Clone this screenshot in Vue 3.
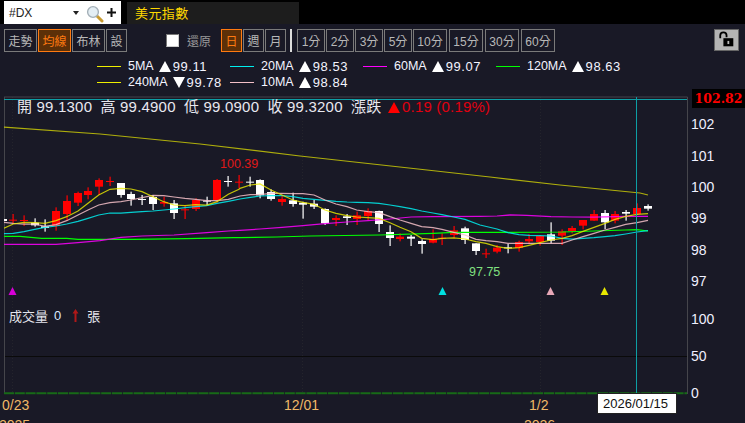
<script setup>
const scale = (x0, y0, pts) => pts.map(([x, y]) => `${(x0 + x / 3).toFixed(1)},${(y0 + y / 3).toFixed(1)}`).join(' ')

const ma5 = scale(0,150,[[12,235],[40,222],[72,217],[104,218],[135,220],[168,212],[200,200],[234,183],[264,160],[296,135],[330,118],[363,115],[393,117],[426,125],[459,140],[491,155],[522,165],[555,167],[587,164],[620,165],[651,155],[685,133],[717,118]])
  + ' ' + scale(240,170,[[0,55],[31,45],[60,42],[93,60],[126,75],[159,90],[189,97],[222,103],[255,120],[288,130],[321,137],[350,141],[384,143],[417,145],[450,158],[480,172],[513,185],[545,205],[579,209],[606,205],[641,204],[675,207],[708,215],[738,220]])
  + ' ' + scale(480,170,[[51,230],[84,235],[117,233],[147,226],[180,218],[213,210],[246,205],[276,197],[309,184],[342,172],[375,160],[405,148],[437,139],[471,133],[504,131]])
const ma10 = scale(0,150,[[12,217],[40,220],[72,222],[104,222],[135,229],[168,224],[200,212],[234,195],[264,180],[296,165],[330,158],[363,155],[393,150],[426,143],[459,136],[491,137],[522,141],[555,145],[587,148],[620,152],[651,152],[685,148]])
  + ' ' + scale(240,170,[[0,78],[31,74],[60,74],[93,70],[126,70],[159,71],[189,71],[222,75],[255,90],[288,102],[321,110],[350,120],[384,125],[417,128],[450,140],[480,150],[513,160],[545,170],[579,173],[606,178],[641,187],[675,195],[708,208]])
  + ' ' + scale(480,170,[[18,212],[51,215],[84,220],[117,220],[147,220],[180,220],[213,220],[246,220],[276,210],[309,200],[342,190],[375,180],[405,172],[437,163],[471,158],[504,151]])
const ma20 = scale(0,150,[[12,251],[40,250],[72,245],[104,238],[135,232],[168,228],[200,222],[234,214],[264,205],[296,195],[330,189],[363,189],[393,187],[426,185],[459,183],[491,180],[522,177],[555,173],[587,170],[620,167],[651,160],[685,154]])
  + ' ' + scale(240,170,[[0,87],[31,82],[60,78],[93,77],[126,77],[159,80],[189,85],[222,88],[255,91],[288,94],[321,96],[350,97],[384,98],[417,100],[450,105],[480,110],[513,116],[545,123],[579,129],[606,134],[641,141],[675,148]])
  + ' ' + scale(480,170,[[0,165],[51,177],[84,188],[117,194],[147,196],[180,197],[213,198],[246,205],[276,207],[309,205],[342,203],[375,200],[405,197],[437,192],[471,186],[504,182]])
const ma60 = scale(0,150,[[12,283],[100,283],[168,283],[234,278],[300,272],[363,262],[426,258],[522,255],[620,248],[685,243]])
  + ' ' + scale(240,170,[[0,181],[60,177],[126,172],[189,167],[255,161],[321,156],[384,152],[450,147],[513,141],[579,140]])
  + ' ' + scale(480,170,[[0,139],[51,138],[90,135],[140,136],[213,140],[276,141],[342,141],[437,139],[504,139]])
const ma120 = scale(0,150,[[12,259],[60,259],[125,265],[200,265],[234,268],[400,268],[560,266],[700,263]])
  + ' ' + scale(240,170,[[0,203],[110,201],[210,198],[420,195],[579,190],[640,187]])
  + ' ' + scale(480,170,[[0,187],[90,187],[246,186],[342,183],[437,180],[471,179],[504,183]])
const ma240 = '4,127 100,134 200,144 300,156 427,170 490,177 560,185 600,189 640,193 648,195'

const lines = [
  { c: '#0f0', p: ma120, o: 1 },
  { c: '#f0f', p: ma60, o: .85 },
  { c: '#0ee', p: ma20, o: .85 },
  { c: '#f4c0c8', p: ma10, o: .85 },
  { c: '#ee0', p: ma5, o: .8 },
  { c: '#ee0', p: ma240, o: .7 }
]

const c3 = (r, x, hi, lo, t, b) => ({ r, x: x / 3, hi: 150 + hi / 3, lo: 150 + lo / 3, t: 150 + t / 3, b: 150 + b / 3 })
const c4 = (r, x, hi, lo, t, b) => ({ r, x: 240 + x / 3, hi: 170 + hi / 3, lo: 170 + lo / 3, t: 170 + t / 3, b: 170 + b / 3 })
const c5 = (r, x, hi, lo, t, b) => ({ r, x: 480 + x / 3, hi: 170 + hi / 3, lo: 170 + lo / 3, t: 170 + t / 3, b: 170 + b / 3 })
const candles = [
  c3(0,8,207,213,207,213),
  c3(1,40,192,222,209,212),c3(1,72,196,228,210,213),c3(0,104,205,230,218,226),c3(0,135,208,245,229,234),
  c3(1,168,172,242,183,228),c3(1,200,136,213,153,192),c3(1,234,125,168,129,158),c3(1,264,112,148,123,135),
  c3(1,296,85,135,90,110),c3(1,330,80,108,93,96),c3(0,363,99,143,99,135),c3(0,393,125,167,132,147),
  c3(0,426,135,165,147,150),c3(0,459,135,180,141,162),c3(1,491,140,170,156,161),c3(0,522,150,207,160,189),
  c3(1,555,165,207,178,181),c3(1,587,145,183,150,177),c3(0,620,140,165,152,155),c3(1,651,87,158,90,150),
  c3(0,685,78,110,93,96),c3(1,717,75,115,95,98),
  c4(0,31,20,50,35,38),c4(0,60,28,85,30,76),c4(0,93,58,92,66,87),c4(1,126,78,107,87,96),c4(0,159,68,110,91,102),
  c4(0,189,95,146,98,104),c4(0,222,90,117,101,110),c4(0,255,115,165,117,160),c4(1,288,136,168,144,150),
  c4(0,321,132,165,139,144),c4(1,350,125,165,136,147),c4(1,384,115,150,123,138),c4(0,417,122,186,123,162),
  c4(0,450,166,228,186,204),c4(1,480,190,214,200,207),c4(0,513,195,228,200,206),c4(0,545,208,251,213,222),
  c4(1,579,178,220,207,218),c4(1,606,190,225,203,206),c4(1,641,168,205,181,195),c4(0,675,170,222,175,210),
  c4(0,708,220,255,220,243),c4(1,738,236,264,250,253),
  c5(1,51,225,250,233,245),c5(0,84,222,250,232,235),c5(1,117,212,245,216,234),c5(1,147,192,222,207,214),
  c5(1,180,195,227,198,216),c5(0,213,157,220,193,212),c5(1,246,178,225,184,197),c5(1,276,168,190,174,183),
  c5(1,309,150,178,150,167),c5(1,342,120,153,132,152),c5(0,375,120,177,129,157),c5(1,405,123,160,132,152),
  c5(0,437,120,152,126,131),c5(1,471,100,135,114,132),c5(0,504,103,122,108,116)
]

const markers = [
  { x: 12.5, c: '#d800d8' },
  { x: 442.5, c: '#00e0e0' },
  { x: 550.5, c: '#e8a8b8' },
  { x: 604.5, c: '#e8e800' }
]

const periods = ['1分','2分','3分','5分','10分','15分','30分','60分']
const legend = [
  [{ c: '#ee0', n: '5MA', d: 'up', v: '99.11' }, { c: '#0ee', n: '20MA', d: 'up', v: '98.53' }, { c: '#f0f', n: '60MA', d: 'up', v: '99.07' }, { c: '#0f0', n: '120MA', d: 'up', v: '98.63' }],
  [{ c: '#ee0', n: '240MA', d: 'down', v: '99.78' }, { c: '#f4c0c8', n: '10MA', d: 'up', v: '98.84' }]
]
const yTicks = [['102',124],['101',155.5],['100',187],['99',218],['98',249.5],['97',281],['100',319],['50',356],['0',393]]
</script>

<template>
  <div class="page">
    <header class="topbar">
      <div class="search">
        <span class="code">#DX</span>
        <span class="caret"></span>
        <svg class="lens" viewBox="0 0 18 18" width="18" height="18">
          <path d="M11 11l5 5" stroke="#c89a30" stroke-width="3" stroke-linecap="round"/>
          <circle cx="7" cy="7" r="5.4" fill="#e4eef4" stroke="#a4b0b8" stroke-width="1.4"/>
        </svg>
        <svg class="plus" viewBox="0 0 9 9" width="9" height="9"><path d="M3.5 0h2v3.5H9v2H5.5V9h-2V5.5H0v-2h3.5z" fill="#111"/></svg>
      </div>
      <div class="title">美元指數</div>
    </header>

    <div class="toolbar">
      <div class="btns">
        <button class="btn w32">走勢</button>
        <button class="btn w32 on">均線</button>
        <button class="btn w32">布林</button>
        <button class="btn w20">設</button>
      </div>
      <label class="restore"><span class="check"></span>還原</label>
      <div class="btns">
        <button class="btn w20 on">日</button>
        <button class="btn w20">週</button>
        <button class="btn w20">月</button>
      </div>
      <span class="sep"></span>
      <div class="btns">
        <button v-for="(p, i) in periods" :key="p" class="btn" :class="i < 4 ? 'w27' : 'w34'">{{ p }}</button>
      </div>
      <button class="lock">
        <svg viewBox="0 0 20 20" width="18" height="18">
          <path d="M2.5 8V5a3.5 3.5 0 0 1 7 0v2" fill="none" stroke="#000" stroke-width="2"/>
          <rect x="6" y="8" width="11" height="9" fill="#000"/>
          <rect x="10.5" y="11" width="2" height="3.5" fill="#bbb"/>
        </svg>
      </button>
    </div>

    <div class="legend">
      <div v-for="(row, ri) in legend" :key="ri" class="legend-row">
        <div v-for="m in row" :key="m.n" class="legend-item">
          <svg class="swatch" width="24" height="3" viewBox="0 0 24 3"><path d="M0 1.5H24" :stroke="m.c" stroke-width="1"/></svg>
          <span class="ma">{{ m.n }}</span>
          <span class="tri" :class="m.d"></span>
          <span class="val">{{ m.v }}</span>
        </div>
      </div>
    </div>

    <div class="chart">
      <svg class="plot" width="745" height="423" viewBox="0 0 745 423">
        <defs><clipPath id="plotclip"><rect x="4" y="97" width="684" height="296"/></clipPath></defs>
        <path d="M12.5 97V393M302.5 97V393M540.5 97V393" stroke="#24242c" stroke-width="1" stroke-dasharray="1 2"/>
        <path d="M4 356.5H687" stroke="#0a0a0a" stroke-width="1"/>
        <path d="M4.5 97V393M4 97H687.5V394" fill="none" stroke="#45454b" stroke-width="1"/>
        <path d="M4 393.2H687" stroke="#176a17" stroke-width="2" stroke-dasharray="10 .8"/>
        <g clip-path="url(#plotclip)">
          <g v-for="(k, i) in candles" :key="i">
            <rect :x="Math.round(k.x) - .5" :y="k.hi" width="1.2" :height="k.lo - k.hi" :fill="k.r ? '#f00' : '#fff'"/>
            <rect :x="Math.round(k.x) - 4" :y="k.t" width="8" :height="Math.max(k.b - k.t, 1)" :fill="k.r ? '#f00' : '#fff'"/>
          </g>
          <polyline v-for="(l, i) in lines" :key="i" :points="l.p" fill="none" :stroke="l.c" stroke-width="1.25" :opacity="l.o"/>
        </g>
        <path d="M4 99.5H687M636.5 97V393" stroke="#0d9ea4" stroke-width="1"/>
        <polygon v-for="m in markers" :key="m.x" :points="`${m.x - 4},295 ${m.x + 4},295 ${m.x},287`" :fill="m.c"/>
      </svg>

      <div class="ohlc">
        <span class="q">開 99.1300</span><span class="q">高 99.4900</span><span class="q">低 99.0900</span><span class="q">收 99.3200</span><span class="zd">漲跌</span>
        <span class="red"><i class="tri up redtri"></i>0.19 (0.19%)</span>
      </div>
      <div class="pin hi">100.39</div>
      <div class="pin lo">97.75</div>
      <div class="vol">成交量<b>0</b>
        <svg class="arrow" viewBox="0 0 7 13" width="7" height="13"><path d="M3.5 0L6.5 4.5H4.5V13H2.5V4.5H.5z" fill="#b01818"/></svg>
        張</div>
      <div class="price">102.82</div>
      <div v-for="(t, i) in yTicks" :key="i" class="ytick" :style="{ top: t[1] - 8 + 'px' }">{{ t[0] }}</div>
      <div class="xtick" style="left:2px">0/23</div>
      <div class="xtick" style="left:284px">12/01</div>
      <div class="xtick" style="left:529px">1/2</div>
      <div class="year" style="left:-1px">2025</div>
      <div class="year" style="left:524px">2026</div>
      <div class="datebox">2026/01/15</div>
    </div>
  </div>
</template>

<style>
html, body { margin: 0; background: #000; }
</style>

<style scoped>
.page { width: 745px; height: 423px; overflow: hidden; position: relative; background: #191926; font-family: "Liberation Sans", "Noto Sans CJK TC", sans-serif; color: #fff; }
.topbar { height: 24px; background: #000; display: flex; gap: 6px; padding-left: 4px; box-sizing: border-box; }
.search { width: 117px; height: 23px; margin-top: 1px; background: #fff; display: flex; align-items: center; color: #222; font-size: 12px; padding: 0 5px 0 5px; box-sizing: border-box; }
.code { flex: 1; }
.caret { width: 0; height: 0; border-left: 3.5px solid transparent; border-right: 3.5px solid transparent; border-top: 4px solid #222; margin-right: 7px; }
.lens { margin-top: 3px; }
.plus { margin-left: 3px; }
.title { width: 172px; height: 22px; margin-top: 2px; background: #1d1d1d; color: #ffd800; font-size: 13px; line-height: 23px; padding-left: 8px; box-sizing: border-box; letter-spacing: .4px; }
.toolbar { display: flex; align-items: center; height: 23px; margin-top: 5px; padding-left: 4px; }
.btns { display: flex; gap: 1px; }
.btn { height: 23px; padding: 0; border: 1px solid #7a7a7a; background: transparent; color: #b8b8b8; font: 12px "Liberation Sans", "Noto Sans CJK TC", sans-serif; box-sizing: border-box; }
.btn.on { border-color: #ff7a10; background: #5c3008; color: #ff7a10; }
.w32 { width: 33px; }
.w20 { width: 21px; }
.w27 { width: 28px; }
.w34 { width: 34px; margin-right: 1px; }
.restore { display: flex; align-items: center; gap: 8px; font-size: 12px; color: #9a9a9a; margin-left: 39px; margin-right: 10px; }
.check { width: 11px; height: 11px; background: #fff; border: 1px solid; border-color: #777 #ccc #ccc #777; }
.sep { width: 2px; height: 23px; background: #ddd; margin: 0 5px 0 4px; }
.lock { position: absolute; left: 714px; top: 29px; width: 25px; height: 22px; padding: 0; background: #b4b4b4; border: 1px solid #666; box-sizing: border-box; display: flex; align-items: center; justify-content: center; }
.legend { position: absolute; top: 58px; left: 97px; font-size: 12.5px; color: #f4f4ff; }
.legend-row { display: flex; height: 16px; align-items: center; }
.legend-item { display: flex; align-items: center; width: 133px; height: 16px; }
.swatch { flex: none; margin-right: 7px; }
.ma { margin-right: 5px; }
.val { font-size: 13px; letter-spacing: .55px; margin-left: 2px; }
.tri { display: inline-block; width: 0; height: 0; border-left: 6px solid transparent; border-right: 6px solid transparent; }
.tri.up { border-bottom: 11px solid #fff; }
.tri.down { border-top: 11px solid #fff; }
.tri.redtri { border-bottom-color: #f00; margin-right: 2px; }
.chart { position: absolute; inset: 0; pointer-events: none; }
.plot { position: absolute; inset: 0; }
.ohlc { position: absolute; left: 17px; top: 98px; display: flex; font-size: 15px; color: #e8e8f0; line-height: 18px; letter-spacing: .2px; white-space: nowrap; }
.q { width: 83.5px; }
.zd { width: 37px; }
.red { color: #e00010; display: flex; align-items: center; }
.pin { position: absolute; font-size: 12.5px; }
.pin.hi { left: 220px; top: 157px; color: #e01818; }
.pin.lo { left: 469px; top: 265px; color: #80e080; }
.vol { position: absolute; left: 9px; top: 306px; font-size: 13px; color: #e4e4ec; display: flex; align-items: center; }
.vol b { font-weight: 400; margin: 0 11px 0 6px; color: #dce8ff; }
.arrow { margin-right: 8px; }
.price { position: absolute; left: 692px; top: 89px; width: 53px; height: 19px; background: #000; color: #f00; font: 700 12.5px/19px "DejaVu Serif", serif; text-align: center; }
.ytick { position: absolute; left: 691px; font-size: 14px; line-height: 16px; color: #f0f0ff; }
.xtick { position: absolute; top: 397px; font-size: 14px; line-height: 16px; color: #f0b868; }
.year { position: absolute; top: 417px; font-size: 14px; line-height: 16px; color: #f0b868; }
.datebox { position: absolute; left: 597px; top: 393px; width: 80px; height: 21px; background: #fff; border: 1px solid #222; box-sizing: border-box; color: #111; font-size: 13px; line-height: 19px; padding-left: 5px; }
</style>
